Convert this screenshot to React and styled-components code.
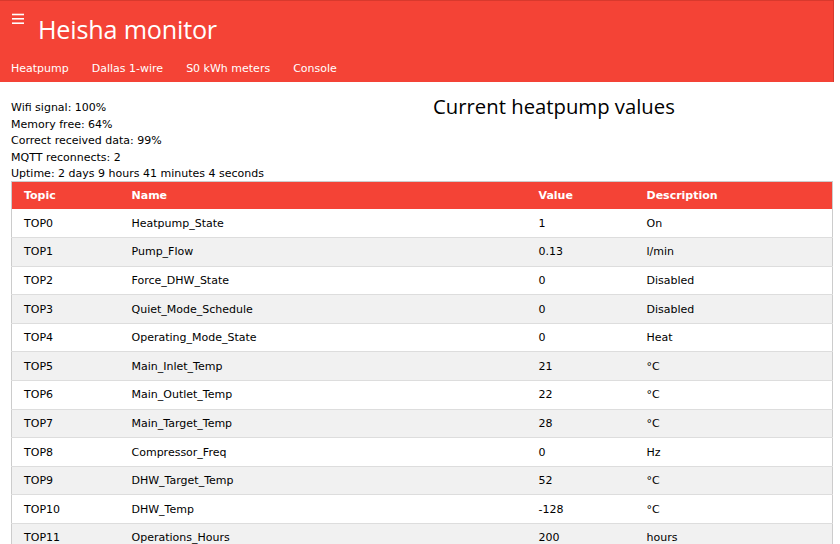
import React from 'react';
import styled, { createGlobalStyle } from 'styled-components';

const GlobalStyle = createGlobalStyle`
  html, body {
    margin: 0;
    padding: 0;
    background: #fff;
  }
  body {
    font-family: "DejaVu Sans", Verdana, sans-serif;
    font-size: 11px;
    color: #000;
  }
`;

const rows = [
  ['TOP0', 'Heatpump_State', '1', 'On'],
  ['TOP1', 'Pump_Flow', '0.13', 'l/min'],
  ['TOP2', 'Force_DHW_State', '0', 'Disabled'],
  ['TOP3', 'Quiet_Mode_Schedule', '0', 'Disabled'],
  ['TOP4', 'Operating_Mode_State', '0', 'Heat'],
  ['TOP5', 'Main_Inlet_Temp', '21', '°C'],
  ['TOP6', 'Main_Outlet_Temp', '22', '°C'],
  ['TOP7', 'Main_Target_Temp', '28', '°C'],
  ['TOP8', 'Compressor_Freq', '0', 'Hz'],
  ['TOP9', 'DHW_Target_Temp', '52', '°C'],
  ['TOP10', 'DHW_Temp', '-128', '°C'],
  ['TOP11', 'Operations_Hours', '200', 'hours'],
];

const App = () => {
  return (
    <Page>
      <GlobalStyle />
      <Header>
        <TitleRow>
          <Burger viewBox="0 0 14 12" aria-hidden="true">
            <line x1="1" y1="1.5" x2="13" y2="1.5" />
            <line x1="1" y1="5.8" x2="13" y2="5.8" />
            <line x1="1" y1="10.2" x2="13" y2="10.2" />
          </Burger>
          <Title>Heisha monitor</Title>
        </TitleRow>
        <Nav>
          <NavLink href="#">Heatpump</NavLink>
          <NavLink href="#">Dallas 1-wire</NavLink>
          <NavLink href="#">S0 kWh meters</NavLink>
          <NavLink href="#">Console</NavLink>
        </Nav>
      </Header>

      <Content>
        <InfoRow>
          <Stats>
            <div>Wifi signal: 100%</div>
            <div>Memory free: 64%</div>
            <div>Correct received data: 99%</div>
            <div>MQTT reconnects: 2</div>
            <div>Uptime: 2 days 9 hours 41 minutes 4 seconds</div>
          </Stats>
          <PageTitle>Current heatpump values</PageTitle>
        </InfoRow>

        <Table>
          <colgroup>
            <col style={{ width: 108 }} />
            <col style={{ width: 407 }} />
            <col style={{ width: 108 }} />
            <col />
          </colgroup>
          <thead>
            <HeadRow>
              <Th>Topic</Th>
              <Th>Name</Th>
              <Th>Value</Th>
              <Th>Description</Th>
            </HeadRow>
          </thead>
          <tbody>
            {rows.map((r, i) => (
              <Row key={r[0]} $odd={i % 2 === 1}>
                <Td>{r[0]}</Td>
                <Td>{r[1]}</Td>
                <Td>{r[2]}</Td>
                <Td>{r[3]}</Td>
              </Row>
            ))}
          </tbody>
        </Table>
      </Content>
    </Page>
  );
};

const Page = styled.div`
  width: 840px;
  height: 544px;
  overflow: hidden;
`;

const Header = styled.header`
  width: 834px;
  height: 82px;
  background: #f44336;
  color: #fff;
  border-top: 1px solid #d8392d;
  border-right: 1px solid #d8392d;
  box-sizing: border-box;
  display: flex;
  flex-direction: column;
`;

const TitleRow = styled.div`
  display: flex;
  align-items: flex-start;
  height: 56px;
  padding-left: 11px;
`;

const Burger = styled.svg`
  width: 14px;
  height: 12px;
  margin-top: 12px;
  stroke: #fff;
  stroke-width: 1.6;
  fill: none;
`;

const Title = styled.h1`
  margin: 10px 0 0 13px;
  font-family: "Open Sans", "Noto Sans", sans-serif;
  font-weight: 400;
  font-size: 25.2px;
  line-height: 36px;
  letter-spacing: -0.2px;
`;

const Nav = styled.nav`
  display: flex;
  align-items: center;
  height: 26px;
  padding-left: 11px;
`;

const NavLink = styled.a`
  color: #fff;
  text-decoration: none;
  margin-right: 23px;
  font-size: 11px;
  line-height: 26px;
`;

const Content = styled.main`
  padding: 18px 8px 0 11px;
`;

const InfoRow = styled.div`
  display: flex;
  align-items: flex-start;
`;

const Stats = styled.div`
  line-height: 16.5px;
  white-space: nowrap;
  margin-bottom: -2px;
`;

const PageTitle = styled.h2`
  flex: 1;
  margin: -9px 0 0;
  padding-left: 12px;
  text-align: center;
  font-family: "Open Sans", "Noto Sans", sans-serif;
  font-weight: 400;
  font-size: 20.3px;
  line-height: 30px;
`;

const Table = styled.table`
  width: 822px;
  border-collapse: collapse;
  border: 1px solid #ccc;
  table-layout: fixed;
`;

const HeadRow = styled.tr`
  background: #f44336;
  color: #fff;
  height: 28px;
`;

const Th = styled.th`
  text-align: left;
  font-weight: 700;
  padding: 0 12px;
  font-size: 11px;
`;

const Row = styled.tr`
  height: 28.6px;
  background: ${(p) => (p.$odd ? '#f1f1f1' : '#fff')};
  border-bottom: 1px solid #ddd;
`;

const Td = styled.td`
  padding: 0 12px;
  font-size: 11px;
  white-space: nowrap;
`;

export default App;
